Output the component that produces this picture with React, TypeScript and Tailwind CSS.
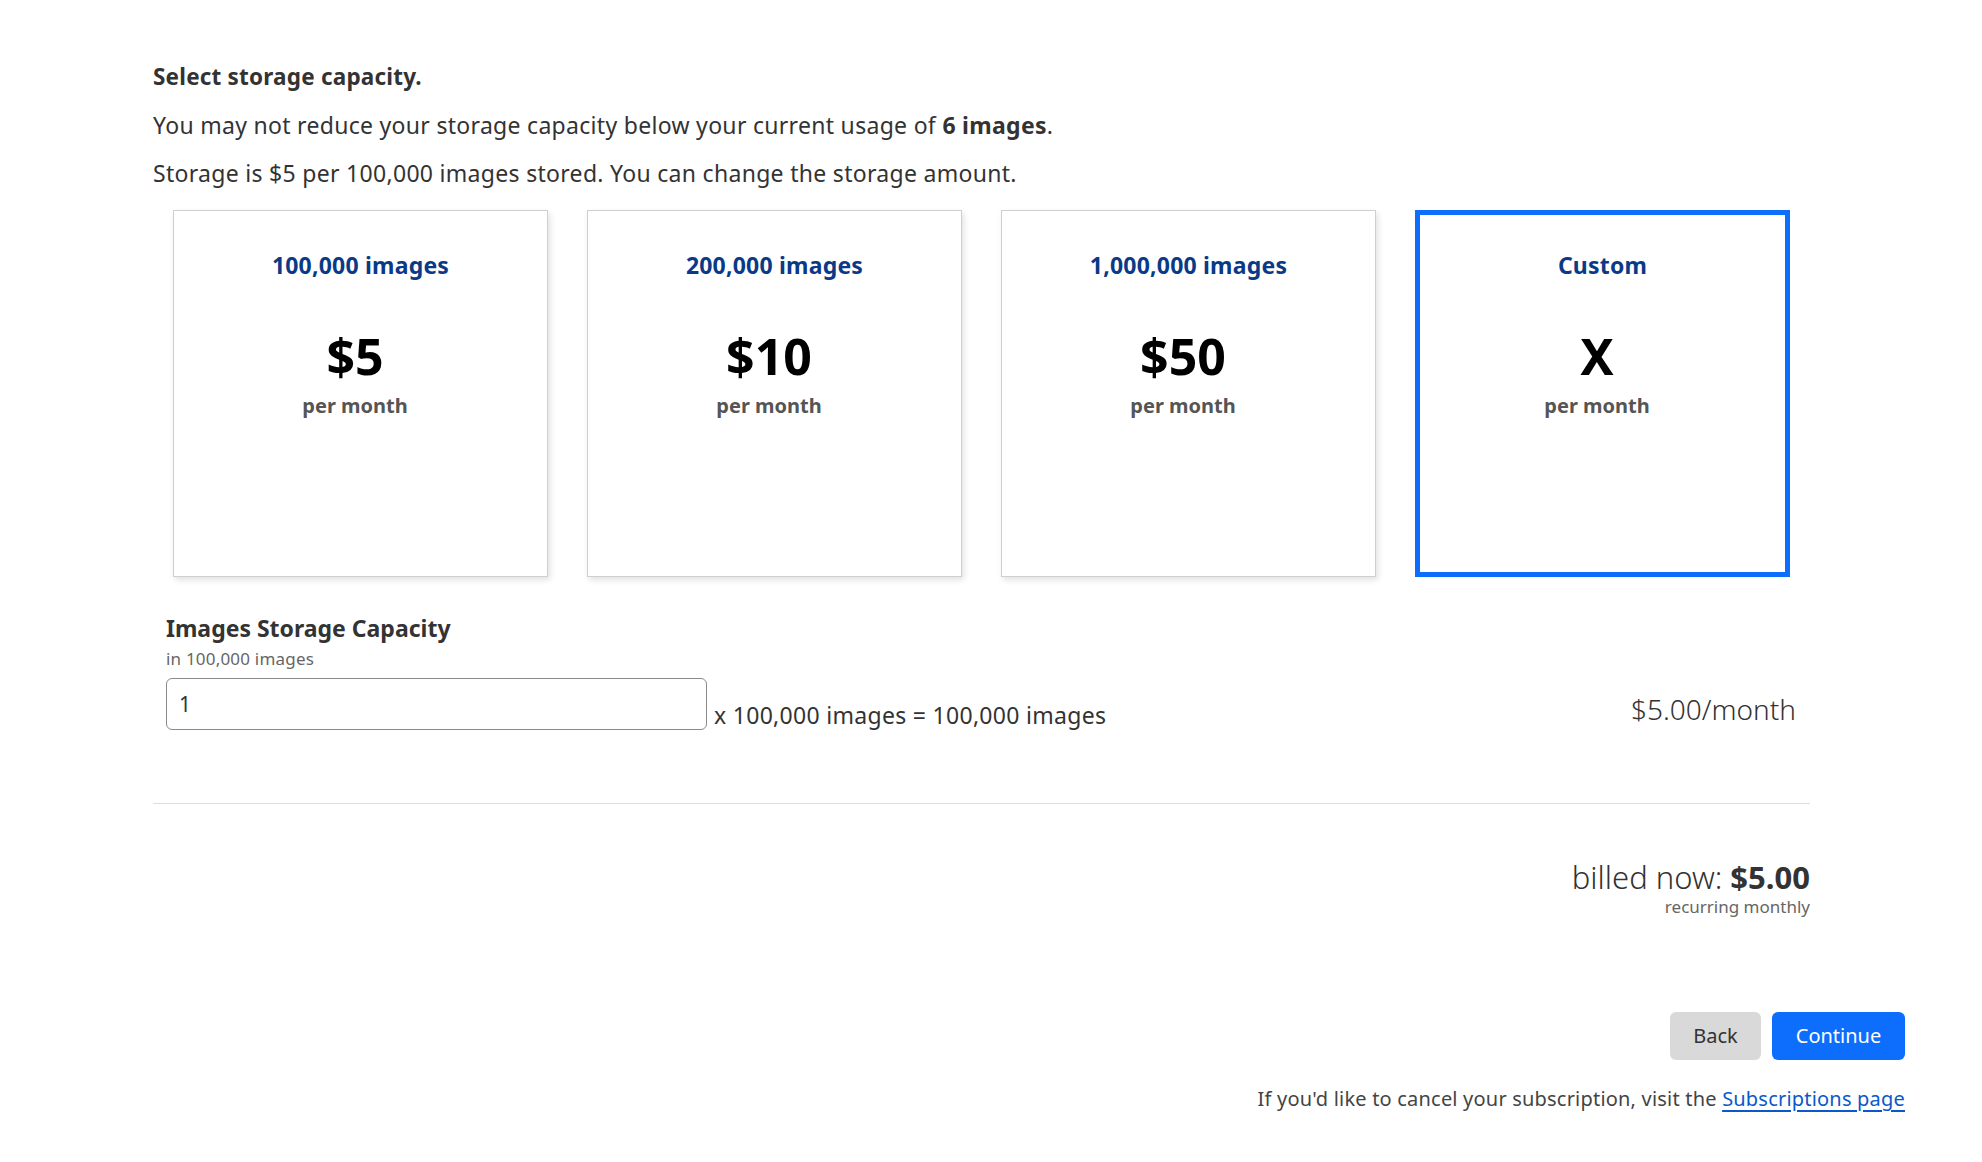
import React from "react";

const plans = [
  { title: "100,000 images", price: "$5" },
  { title: "200,000 images", price: "$10" },
  { title: "1,000,000 images", price: "$50" },
  { title: "Custom", price: "X", selected: true },
];

function PlanCard({ title, price, selected }: { title: string; price: string; selected?: boolean }) {
  return (
    <div
      className={
        selected
          ? "h-[367px] flex flex-col items-center bg-white border-[5px] border-[#0d6efd] pt-[35px]"
          : "h-[367px] flex flex-col items-center bg-white border border-[#cfcfcf] shadow-[2px_3px_6px_rgba(0,0,0,0.12)] pt-[39px]"
      }
    >
      <div className="text-[23px] leading-[30px] font-bold tracking-[0.2px] text-[#0a3a87]">{title}</div>
      <div className="flex flex-col items-center mr-[11px]">
        <div className="mt-[46px] text-[50px] leading-[60px] font-bold text-black">{price}</div>
        <div className="mt-[5px] text-[20px] leading-[30px] font-bold text-[#555]">per month</div>
      </div>
    </div>
  );
}

export default function App() {
  return (
    <div className="min-h-screen bg-white font-['Noto_Sans',sans-serif] text-[#333] px-[77px]">
      <div className="pl-[76px] pr-[95px] pt-[53px]">
        <h2 className="text-[22.5px] leading-[48px] font-bold tracking-[0.2px]">Select storage capacity.</h2>
        <p className="text-[23px] leading-[48px] tracking-[0.3px]">
          You may not reduce your storage capacity below your current usage of{" "}
          <span className="font-bold">6 images</span>.
        </p>
        <p className="text-[23px] leading-[48px] tracking-[0.3px]">
          Storage is $5 per 100,000 images stored. You can change the storage amount.
        </p>

        <div className="mt-[13px] px-[20px] grid grid-cols-4 gap-[39px]">
          {plans.map((p) => (
            <PlanCard key={p.title} {...p} />
          ))}
        </div>

        <div className="mt-[36px] pl-[13px] pr-[14px]">
          <div className="text-[23px] leading-[30px] font-bold">Images Storage Capacity</div>
          <div className="text-[17px] leading-[24px] tracking-[0.2px] text-[#666] mt-[4px]">in 100,000 images</div>
          <div className="flex items-end mt-[7px]">
            <input
              type="text"
              defaultValue="1"
              className="w-[541px] h-[52px] border border-[#8a8a8a] rounded-[6px] px-[12px] text-[21px] text-[#333] outline-none"
            />
            <span className="ml-[7px] text-[23px] leading-[32px] tracking-[0.3px] mb-[-1px]">
              x 100,000 images = 100,000 images
            </span>
            <span className="ml-auto text-[28px] leading-[40px] font-light mb-[1px]">$5.00/month</span>
          </div>
        </div>

        <hr className="mt-[73px] border-0 border-t border-[#dedede]" />

        <div className="flex flex-col items-end mt-[53px]">
          <div className="text-[31px] leading-[40px] font-light">
            billed now: <span className="font-bold">$5.00</span>
          </div>
          <div className="text-[17px] leading-[22px] text-[#666] mt-[-1px]">recurring monthly</div>
        </div>
      </div>

      <div className="flex justify-end gap-[11px] mt-[94px]">
        <button className="w-[91px] h-[48px] rounded-[6px] bg-[#d9d9d9] text-[#333] text-[20px]">Back</button>
        <button className="w-[133px] h-[48px] rounded-[6px] bg-[#0d6efd] text-white text-[20px]">Continue</button>
      </div>

      <div className="flex justify-end mt-[25px] text-[20px] leading-[28px] tracking-[0.2px] text-[#444]">
        <span>
          If you'd like to cancel your subscription, visit the{" "}
          <a href="#" className="text-[#0a58ca] underline underline-offset-4">
            Subscriptions page
          </a>
        </span>
      </div>
    </div>
  );
}
